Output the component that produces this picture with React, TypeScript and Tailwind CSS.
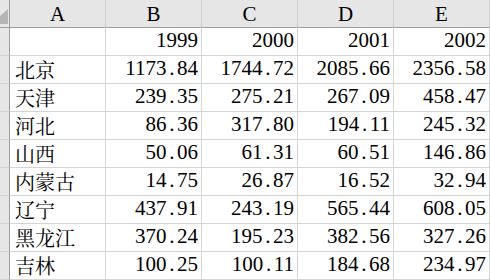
const columns = ['A', 'B', 'C', 'D', 'E'];

const rows: string[][] = [
  ['', '1999', '2000', '2001', '2002'],
  ['北京', '1173.84', '1744.72', '2085.66', '2356.58'],
  ['天津', '239.35', '275.21', '267.09', '458.47'],
  ['河北', '86.36', '317.80', '194.11', '245.32'],
  ['山西', '50.06', '61.31', '60.51', '146.86'],
  ['内蒙古', '14.75', '26.87', '16.52', '32.94'],
  ['辽宁', '437.91', '243.19', '565.44', '608.05'],
  ['黑龙江', '370.24', '195.23', '382.56', '327.26'],
  ['吉林', '100.25', '100.11', '184.68', '234.97'],
];

const serif = "font-['Liberation_Serif','Noto_Serif_CJK_SC','Noto_Sans_CJK_SC',serif]";
const cjk = "font-['Noto_Serif_CJK_SC','Noto_Sans_CJK_SC',serif]";

// half-width period like the sheet's font: every character takes one digit cell
function Num({ value }: { value: string }) {
  const [whole, frac] = value.split('.');
  return (
    <span>
      {whole}
      {frac !== undefined && (
        <>
          <span className="inline-block w-[10.5px] text-center">.</span>
          {frac}
        </>
      )}
    </span>
  );
}

export default function App() {
  return (
    <div className="w-[490px] h-[280px] overflow-hidden bg-white text-black">
      <div className="grid grid-cols-[10px_96px_96px_96px_96px_96px] auto-rows-[28px]">
        {/* Header row */}
        <div className="relative h-[28px] bg-[#e6e6e6] border-r border-b border-[#9e9e9e]">
          <svg className="absolute left-0 top-0" width="9" height="27" viewBox="0 0 9 27">
            <polygon points="8,9 8,24 0,24 0,16" fill="#b5b5b5" />
          </svg>
        </div>
        {columns.map((c) => (
          <div
            key={c}
            className={`h-[28px] flex items-center justify-center bg-[#e6e6e6] border-r border-r-[#d0d0d0] border-b border-b-[#9e9e9e] text-[21px] leading-none pt-[2px] ${serif}`}
          >
            {c}
          </div>
        ))}

        {/* Data rows */}
        {rows.map((r, i) => (
          <div key={i} className="contents">
            <div className="bg-[#e6e6e6] border-r border-b border-r-[#9e9e9e] border-b-[#d4d4d4]" />
            {r.map((v, j) =>
              j === 0 ? (
                <div
                  key={j}
                  className={`flex items-end pb-[3px] pl-[5px] border-r border-b border-[#d4d4d4] text-[20px] leading-none whitespace-nowrap ${cjk}`}
                >
                  {v}
                </div>
              ) : (
                <div
                  key={j}
                  className={`flex items-end justify-end pb-[4px] pr-[3px] border-r border-b border-[#d4d4d4] text-[21px] leading-none whitespace-nowrap ${serif}`}
                >
                  <Num value={v} />
                </div>
              )
            )}
          </div>
        ))}
      </div>
    </div>
  );
}
